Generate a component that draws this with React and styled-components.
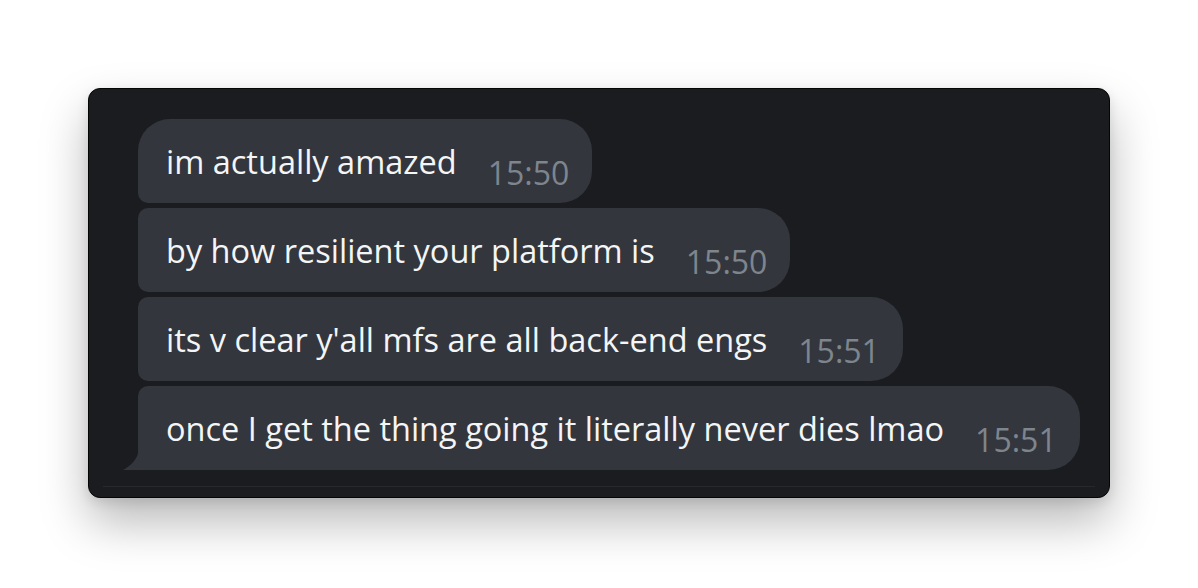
import React from 'react';
import styled, { createGlobalStyle } from 'styled-components';

const GlobalStyle = createGlobalStyle`
  body {
    margin: 0;
    background: #ffffff;
    font-family: "Open Sans", "Liberation Sans", sans-serif;
  }
`;

const Page = styled.div`
  min-height: 588px;
  box-sizing: border-box;
  padding: 88px 0 90px 88px;
`;

const ChatCard = styled.div`
  width: 1022px;
  box-sizing: border-box;
  background: #1b1c20;
  border: 1px solid #050506;
  border-radius: 12px;
  box-shadow: 0 24px 48px rgba(0, 0, 0, 0.28), 0 4px 12px rgba(0, 0, 0, 0.1);
  padding: 30px 0 0 49px;
`;

const MessageList = styled.div`
  display: flex;
  flex-direction: column;
  align-items: flex-start;
  gap: 5px;
`;

const big = '32px';
const small = '10px';

// grouped bubbles: big outer corners, small corners where they stack
const Bubble = styled.div`
  position: relative;
  display: flex;
  align-items: flex-start;
  background: #33363d;
  padding: 21px 23px 8px 28px;
  border-radius: ${({ $first }) => ($first ? big : small)} ${big} ${big}
    ${({ $last }) => ($last ? '0' : small)};
`;

const Text = styled.span`
  color: #f4f5f6;
  font-size: 32.5px;
  line-height: 44px;
  white-space: nowrap;
`;

const Time = styled.span`
  color: #7e858d;
  font-size: 32px;
  line-height: 44px;
  margin: 11px 0 0 31px;
`;

const Tail = styled.svg`
  position: absolute;
  left: -16px;
  bottom: 0;
  width: 17px;
  height: 22px;
`;

const Footer = styled.div`
  margin: 16px 14px 0 -35px;
  height: 10px;
  border-top: 1px solid #26282d;
`;

const messages = [
  { text: 'im actually amazed', time: '15:50' },
  { text: 'by how resilient your platform is', time: '15:50' },
  { text: "its v clear y'all mfs are all back-end engs", time: '15:51' },
  { text: 'once I get the thing going it literally never dies lmao', time: '15:51' },
];

export default function App() {
  return (
    <Page>
      <GlobalStyle />
      <ChatCard>
        <MessageList>
          {messages.map((m, i) => {
            const last = i === messages.length - 1;
            return (
              <Bubble key={i} $first={i === 0} $last={last}>
                {last && (
                  <Tail viewBox="0 0 17 22">
                    <path d="M17 0 L17 22 L1 22 C8 18 16 12 17 0 Z" fill="#33363d" />
                  </Tail>
                )}
                <Text>{m.text}</Text>
                <Time>{m.time}</Time>
              </Bubble>
            );
          })}
        </MessageList>
        <Footer />
      </ChatCard>
    </Page>
  );
}
